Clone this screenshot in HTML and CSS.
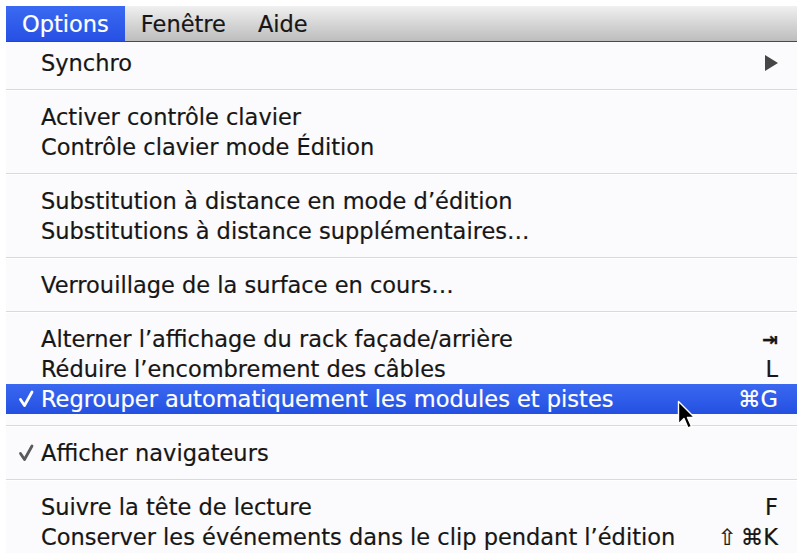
FILE: index.html
```html
<!DOCTYPE html>
<html lang="fr">
<head>
    <meta charset="UTF-8">
    <meta name="viewport" content="width=device-width, initial-scale=1.0">
    <title>Menu Options</title>
    <link rel="stylesheet" href="styles.css">
</head>
<body>
    <div class="screen">
        <nav class="menubar">
            <span class="menubar-item active">Options</span>
            <span class="menubar-item">Fenêtre</span>
            <span class="menubar-item">Aide</span>
        </nav>

        <div class="dropdown">
            <div class="item">
                <span class="check"></span>
                <span class="label">Synchro</span>
                <span class="shortcut"><span class="submenu-arrow"></span></span>
            </div>

            <div class="separator"></div>

            <div class="item">
                <span class="check"></span>
                <span class="label">Activer contrôle clavier</span>
                <span class="shortcut"></span>
            </div>
            <div class="item">
                <span class="check"></span>
                <span class="label">Contrôle clavier mode Édition</span>
                <span class="shortcut"></span>
            </div>

            <div class="separator"></div>

            <div class="item">
                <span class="check"></span>
                <span class="label">Substitution à distance en mode d’édition</span>
                <span class="shortcut"></span>
            </div>
            <div class="item">
                <span class="check"></span>
                <span class="label">Substitutions à distance supplémentaires…</span>
                <span class="shortcut"></span>
            </div>

            <div class="separator"></div>

            <div class="item">
                <span class="check"></span>
                <span class="label">Verrouillage de la surface en cours…</span>
                <span class="shortcut"></span>
            </div>

            <div class="separator"></div>

            <div class="item">
                <span class="check"></span>
                <span class="label">Alterner l’affichage du rack façade/arrière</span>
                <span class="shortcut small">⇥</span>
            </div>
            <div class="item">
                <span class="check"></span>
                <span class="label">Réduire l’encombrement des câbles</span>
                <span class="shortcut">L</span>
            </div>
            <div class="item selected">
                <span class="check">
                    <svg width="16" height="22" viewBox="0 0 16 22">
                        <path d="M2.5 11.5 L6.5 17.5 L14 4" fill="none" stroke="currentColor" stroke-width="2.8" stroke-linecap="round" stroke-linejoin="round"/>
                    </svg>
                </span>
                <span class="label">Regrouper automatiquement les modules et pistes</span>
                <span class="shortcut">⌘G</span>
                <svg class="cursor" width="20" height="31" viewBox="0 0 20 31">
                    <path d="M1.5 1.5 L1.5 24 L7 18.5 L11 28 L14.5 26.5 L10.5 17.5 L17.5 17.5 Z" fill="#000" stroke="#fff" stroke-width="1.4" stroke-linejoin="round"/>
                </svg>
            </div>

            <div class="separator"></div>

            <div class="item">
                <span class="check gray">
                    <svg width="16" height="22" viewBox="0 0 16 22">
                        <path d="M2.5 11.5 L6.5 17.5 L14 4" fill="none" stroke="currentColor" stroke-width="2.8" stroke-linecap="round" stroke-linejoin="round"/>
                    </svg>
                </span>
                <span class="label">Afficher navigateurs</span>
                <span class="shortcut"></span>
            </div>

            <div class="separator"></div>

            <div class="item">
                <span class="check"></span>
                <span class="label">Suivre la tête de lecture</span>
                <span class="shortcut">F</span>
            </div>
            <div class="item">
                <span class="check"></span>
                <span class="label">Conserver les événements dans le clip pendant l’édition</span>
                <span class="shortcut">⇧ ⌘K</span>
            </div>
        </div>
    </div>
</body>
</html>
```

FILE: styles.css
```css
body {
    margin: 0;
    background-color: #ffffff;
    font-family: "DejaVu Sans", Verdana, sans-serif;
    color: #161616;
}

.screen {
    padding: 6px 0 0 6px;
    width: 791px;
}

.menubar {
    display: flex;
    height: 35px;
    align-items: stretch;
    background: linear-gradient(#f0f0f0, #d6d6d6 50%, #bdbdbd);
    border-bottom: 1px solid #4a4a4a;
    font-size: 22.5px;
}

.menubar-item {
    display: flex;
    align-items: center;
    padding: 0 16px;
    -webkit-text-stroke: 0.2px currentColor;
}

.menubar-item.active {
    background: linear-gradient(#3a6af2, #2650e4);
    color: #ffffff;
}

.dropdown {
    background-color: #fbfafc;
    padding: 6px 0 1px 0;
    font-size: 22.5px;
}

.item {
    position: relative;
    display: flex;
    align-items: center;
    height: 30px;
    padding-right: 19px;
    -webkit-text-stroke: 0.2px currentColor;
}

.check {
    display: flex;
    align-items: center;
    width: 35px;
    height: 30px;
    flex-shrink: 0;
    padding-left: 12px;
    box-sizing: border-box;
}

.check.gray {
    color: #5a5a5a;
}

.label {
    flex: 1;
    white-space: nowrap;
}

.shortcut {
    white-space: nowrap;
    word-spacing: -3px;
}

.shortcut.small {
    font-size: 19px;
    font-weight: bold;
}

.submenu-arrow {
    display: block;
    width: 0;
    height: 0;
    border-top: 8px solid transparent;
    border-bottom: 8px solid transparent;
    border-left: 13px solid #464646;
}

.selected {
    background: linear-gradient(#3a68f0, #2450e2);
    color: #ffffff;
}

.cursor {
    position: absolute;
    left: 671px;
    top: 16px;
}

.separator {
    height: 24px;
    display: flex;
    align-items: center;
}

.separator::before {
    content: "";
    display: block;
    width: 100%;
    height: 1px;
    background-color: #dadada;
    border-bottom: 1px solid #ffffff;
}
```
